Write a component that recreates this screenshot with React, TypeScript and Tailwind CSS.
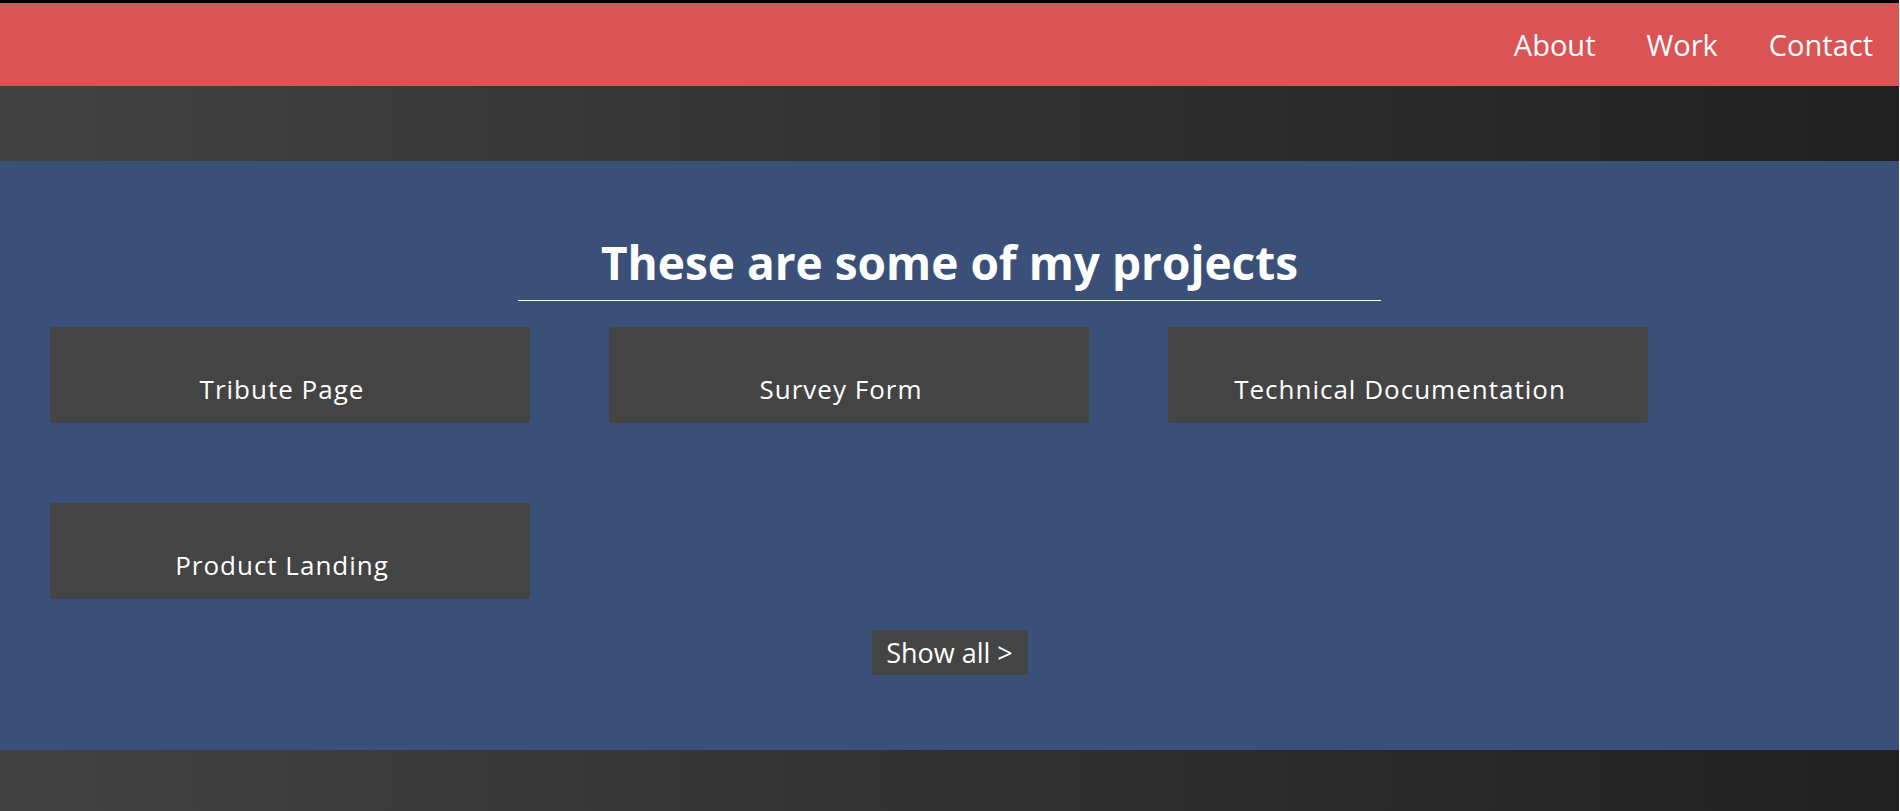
import React from "react";

const projects = ["Tribute Page", "Survey Form", "Technical Documentation", "Product Landing"];

export default function App() {
  return (
    <div className="mr-px font-['Open_Sans',sans-serif] text-white">
      {/* header */}
      <header className="h-[86px] border-t-[3px] border-black bg-[#da5355] flex items-center justify-end gap-[51px] pr-[26px]">
        {["About", "Work", "Contact"].map((l) => (
          <a key={l} href="#" className="text-[29px] leading-none">
            {l}
          </a>
        ))}
      </header>

      <div className="h-[75px] bg-gradient-to-r from-[#424242] to-[#212121]" />

      {/* projects */}
      <section className="bg-[#3b5079] pt-[72px] pb-[75px]">
        <h2 className="mx-auto w-[863px] border-b border-white pb-[9px] text-center text-[46px] leading-[58px] font-bold">
          These are some of my projects
        </h2>

        <div className="mt-[26px] ml-[50px] grid grid-cols-[repeat(3,480px)] gap-x-[79px] gap-y-[80px]">
          {projects.map((p) => (
            <a
              key={p}
              href="#"
              className="h-[96px] rounded-[3px] bg-[#444444] flex items-end justify-center pr-4 pb-[18px] text-[26px] leading-[31px] tracking-[1px]"
            >
              {p}
            </a>
          ))}
        </div>

        <div className="mt-[31px] flex justify-center">
          <button className="h-[45px] w-[156px] rounded-[3px] bg-[#444444] text-[27px] leading-none">
            Show all &gt;
          </button>
        </div>
      </section>

      <footer className="h-[75px] bg-gradient-to-r from-[#424242] to-[#212121]" />
    </div>
  );
}
